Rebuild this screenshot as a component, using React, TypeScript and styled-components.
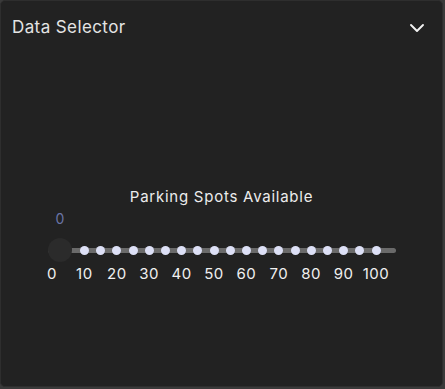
import React from "react";
import styled, { createGlobalStyle } from "styled-components";
import { ChevronDown } from "lucide-react";

const GlobalStyle = createGlobalStyle`
  html, body {
    margin: 0;
    padding: 0;
    background: #3a3a3a;
  }

  body {
    font-family: "Inter", "Noto Sans", sans-serif;
  }
`;

const Card = styled.div`
  width: 443px;
  height: 387px;
  box-sizing: border-box;

  display: flex;
  flex-direction: column;

  background: #222222;
  border: 1px solid #2e2e2e;
  border-radius: 5px;
`;

const Header = styled.div`
  display: flex;
  flex-direction: row;
  align-items: center;
  justify-content: space-between;

  height: 52px;
  padding: 0px 13px 0px 11px;
  box-sizing: border-box;
`;

const HeaderTitle = styled.div`
  font-size: 17px;
  font-weight: 400;
  color: #e4e4e4;
  letter-spacing: 0.4px;
`;

const ToggleIcon = styled.div`
  display: flex;
  align-items: center;
  color: #f2f2f2;
  margin-top: 1px;
`;

const Body = styled.div`
  display: flex;
  flex-direction: column;
  align-items: center;
  padding-top: 134px;
`;

const SliderTitle = styled.div`
  font-size: 15px;
  color: #ececec;
  line-height: 20px;
  letter-spacing: 0.75px;
`;

const SliderArea = styled.div`
  position: relative;
  width: 348px;
  height: 80px;
  margin-left: 1px;
`;

const ValueLabel = styled.div`
  position: absolute;
  top: 3px;
  transform: translateX(-50%);
  font-size: 14px;
  color: #6a74a6;
`;

const Track = styled.div`
  position: absolute;
  left: 0px;
  right: 0px;
  top: 41px;
  height: 5px;
  border-radius: 3px;
  background: #6a6a6a;
`;

const Dot = styled.div`
  position: absolute;
  top: 39px;
  width: 9px;
  height: 9px;
  margin-left: -4.5px;
  border-radius: 50%;
  background: #dde0f6;
`;

const Thumb = styled.div`
  position: absolute;
  top: 31px;
  width: 24px;
  height: 24px;
  margin-left: -12px;
  border-radius: 50%;
  background: #2b2b2b;
`;

const MarkLabel = styled.div`
  position: absolute;
  top: 57px;
  transform: translateX(-50%);
  font-size: 15px;
  letter-spacing: 0.5px;
  color: #f0f0f0;
`;

// value -> px offset inside the slider area
const pos = (v: number) => 4 + 3.24 * v;

const dots = Array.from({ length: 19 }, (_, i) => 10 + i * 5);
const labels = Array.from({ length: 11 }, (_, i) => i * 10);

const App = () => {
  const thumbX = 12;

  return (
    <>
      <GlobalStyle />
      <Card>
        <Header>
          <HeaderTitle>Data Selector</HeaderTitle>
          <ToggleIcon>
            <ChevronDown size={24} strokeWidth={1.9} />
          </ToggleIcon>
        </Header>
        <Body>
          <SliderTitle>Parking Spots Available</SliderTitle>
          <SliderArea>
            <ValueLabel style={{ left: thumbX }}>0</ValueLabel>
            <Track />
            {dots.map((v) => (
              <Dot key={v} style={{ left: pos(v) }} />
            ))}
            <Thumb style={{ left: thumbX }} />
            {labels.map((v) => (
              <MarkLabel key={v} style={{ left: pos(v) }}>
                {v}
              </MarkLabel>
            ))}
          </SliderArea>
        </Body>
      </Card>
    </>
  );
};

export default App;
